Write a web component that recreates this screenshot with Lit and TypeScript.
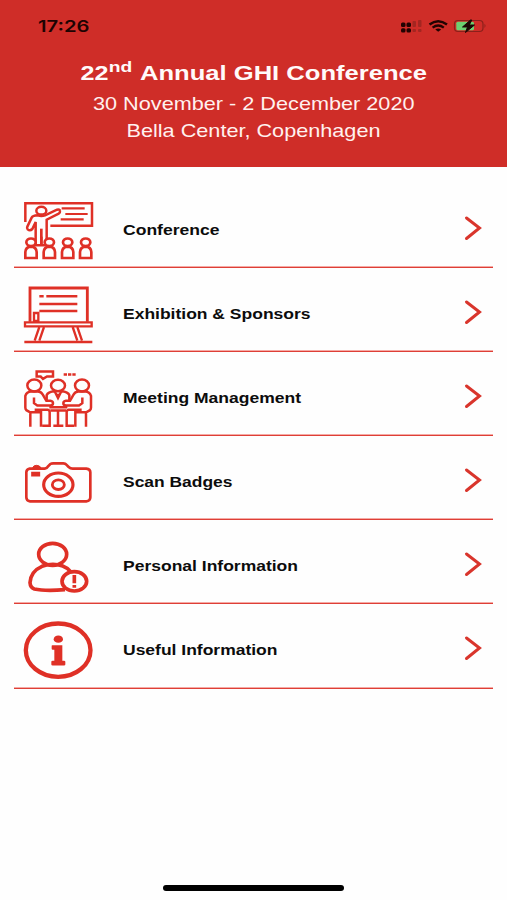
import { LitElement, html, css, svg } from "lit";
import { customElement, property } from "lit/decorators.js";

const conference = svg`
  <path d="M46 96V40H246V107H121"/>
  <path d="M155 55H224M166 72H233M152 88H221" stroke-width="6.500"/>
  <ellipse cx="94" cy="62" rx="15" ry="11.5"/>
  <path d="M83 76Q94 80 105 76L141 59Q149 57 150 63Q151 68 146 71L110 89V166H77V96L67 117Q60 124 53 118Q50 114 52 110L65 83Q68 77 83 76Z"/>
  <path d="M94 116V166" stroke-width="8"/>
  ${[63, 118, 173, 227].map(
    (x) => svg`<g transform="translate(${x} 0)" stroke-width="8">
      <path d="M-17 204V186Q-16 171 0 170Q16 171 17 186V204Z" fill="#fefefe"/>
      <ellipse cx="0" cy="157" rx="14" ry="11.500" fill="#fefefe"/></g>`
  )}
  <path d="M94 140V166" stroke-width="8"/>`;

const exhibition = svg`
  <path d="M60 140V39H232V140" stroke-width="8.500"/>
  <path d="M88 64H101M109 64H202M88 87H202M88 108H202"/>
  <path d="M72 138V114H85V138Z" stroke-width="7"/>
  <path d="M45 142H245V154H45Z" stroke-width="7"/>
  <path d="M88 156L74 197M102 156L88 197M188 156L202 197M202 156L216 197" stroke-width="7"/>
  <path d="M43 201H247" stroke-width="7"/>`;

const guest = svg`
  <ellipse cx="73" cy="77" rx="21" ry="18"/>
  <path d="M61 201V158L49 151Q46 148 46 143V108Q50 96 63 95H84Q94 96 98 104L109 123H121Q129 124 129 130Q129 136 121 137H82L72 130V113M61 157H93V201M74 150H113Q119 151 119 157V198H97"/>`;

const meeting = svg`
  <g stroke-width="7.500">
    <path d="M80 35H129V50H111L99 57L92 50H80Z"/>
    <path d="M161 44H171M174 44H184M187 44H197"/>
    <ellipse cx="144" cy="77" rx="21" ry="17"/>
    <path d="M110 121V106Q114 95 134 94L144 114L154 94Q174 95 178 106V121M144 102V116"/>
    ${guest}
    <g transform="translate(289 0) scale(-1 1)">${guest}</g>
    <path d="M118 142H172M121 152H168M144 152V198M130 198H160"/>
  </g>`;

const camera = svg`
  <path d="M59 72H104Q111 71 115 64L121 58Q124 56 130 56H160Q166 56 169 60L176 67Q181 72 188 72H229Q241 73 241 83V158Q241 169 229 170H60Q49 169 49 158V83Q49 74 59 72Z" stroke-width="8"/>
  <path d="M68 70Q70 62 79 62Q90 62 93 70Z" fill="currentColor" stroke-width="3"/>
  <path d="M66 84H88V93H66Z" fill="currentColor" stroke-width="5"/>
  <ellipse cx="145" cy="120" rx="44" ry="35" stroke-width="9.500"/>
  <ellipse cx="145" cy="120" rx="18" ry="14.5" stroke-width="8.500"/>`;

const person = svg`
  <g stroke-width="11">
    <ellipse cx="128" cy="74" rx="42" ry="33"/>
    <path d="M165 180Q105 185 73 178Q61 174 60 159Q62 125 96 110Q128 98 158 109Q174 115 183 127"/>
    <ellipse cx="193" cy="155" rx="37" ry="29"/>
    <path d="M193 136V161M193 166V174"/>
  </g>`;

const info = svg`
  <ellipse cx="144.500" cy="116" rx="97" ry="80" stroke-width="13"/>
  <ellipse cx="145" cy="83" rx="14" ry="11" fill="currentColor" stroke="none"/>
  <path d="M125 103Q125 101 127 101H157V148H162Q166 148 166 151V159Q166 162 162 162H128Q124 162 124 159V151Q124 148 128 148H133V115H128Q125 115 125 112Z" fill="currentColor" stroke="none"/>`;

const items = [
  { label: "Conference", width: 96.5, icon: conference, top: 18 },
  { label: "Exhibition & Sponsors", width: 187.5, icon: exhibition, top: 21 },
  { label: "Meeting Management", width: 178, icon: meeting, top: 23.5 },
  { label: "Scan Badges", width: 109.5, icon: camera, top: 26 },
  { label: "Personal Information", width: 175, icon: person, top: 29 },
  { label: "Useful Information", width: 154.5, icon: info, top: 22.5 },
];

@customElement("menu-row")
class MenuRow extends LitElement {
  @property({ attribute: false }) item!: (typeof items)[number];

  static styles = css`
    :host {
      display: grid;
      grid-template-columns: 100px 1fr 28px;
      height: 84.1px;
      box-sizing: border-box;
      border-bottom: 1px solid #de3f37;
      box-shadow: inset 0 -1px #f5aaa5;
    }
    svg { display: block; overflow: visible; }
    .icon {
      width: 100px;
      height: 84px;
      margin-left: -4px;
      color: #df3026;
      fill: none;
      stroke: currentColor;
      stroke-width: 7.5;
    }
    .label {
      height: 83px;
      margin-left: 8.5px;
      font: bold 15px "Liberation Sans", Arial, sans-serif;
      fill: #0c0c0c;
    }
    .chevron {
      width: 28px;
      height: 83px;
      fill: none;
      stroke: #d9352c;
      stroke-width: 3;
      stroke-linecap: round;
    }
  `;

  render() {
    const { label, width, icon, top } = this.item;
    return html`
      <svg class="icon" viewBox="0 ${-top} 300 252">${icon}</svg>
      <svg class="label"><text x="0" y="51" textLength=${width} lengthAdjust="spacingAndGlyphs">${label}</text></svg>
      <svg class="chevron" viewBox="0 0 28 83"><path d="M1.500 34L14.500 44L1.500 54.500"/></svg>
    `;
  }
}

@customElement("app-root")
class AppRoot extends LitElement {
  static styles = css`
    :host {
      display: flex;
      flex-direction: column;
      height: 900px;
      background: #fefefe;
      font-family: "Liberation Sans", Arial, sans-serif;
    }
    svg { display: block; }
    .header { height: 167px; background: #cf2d28; }
    .status { display: flex; justify-content: space-between; height: 52px; padding: 0 20px 0 38px; }
    .time { font: 600 16px Inter, sans-serif; fill: #1d0302; }
    .heading { fill: #fff1ef; }
    .title { font-size: 21px; font-weight: bold; fill: #fffafa; }
    .sup { font-size: 15px; font-weight: bold; fill: #fffafa; }
    .sub { font-size: 18.5px; }
    .list { flex: 1; padding: 17px 14px 0; }
    .home { align-self: center; width: 181px; height: 6px; margin-bottom: 9px; border-radius: 3px; background: #000; }
  `;

  render() {
    return html`
      <div class="header">
        <div class="status">
          <svg width="60" height="52"><text class="time" x="0" y="31.500" textLength="51.500" lengthAdjust="spacingAndGlyphs">17:26</text></svg>
          <svg width="90" height="52" viewBox="397 0 90 52">
            <g fill="#210302">
              <rect x="401" y="22.500" width="4.500" height="4.500" rx="1.500"/><rect x="406.500" y="22.500" width="4.500" height="4.500" rx="1.500"/>
              <rect x="401" y="28.300" width="4.500" height="4.200" rx="1.500"/><rect x="406.500" y="28.300" width="4.500" height="4.200" rx="1.500"/>
            </g>
            <g fill="#a32621">
              <rect x="412.500" y="21" width="3.500" height="6" rx="1"/><rect x="418" y="20" width="3.500" height="7" rx="1"/>
              <rect x="412.500" y="29" width="3.500" height="3" rx="1"/><rect x="418" y="29" width="3.500" height="3" rx="1"/>
            </g>
            <g fill="none" stroke="#210302" stroke-width="2.400">
              <path d="M429.500 24.500Q438.200 17.800 447 24.500"/><path d="M432.600 27.600Q438.200 23.500 443.800 27.600"/>
            </g>
            <path d="M435.300 29.400Q438.200 27.500 441.200 29.400L438.200 31.800Z" fill="#210302"/>
            <rect x="454.500" y="20.500" width="28.500" height="11" rx="3.500" fill="none" stroke="#8b201b" stroke-width="1.200"/>
            <path d="M484.500 23.800Q486.500 25.800 484.500 28Z" fill="#8b201b"/>
            <rect x="456.300" y="21.800" width="17.700" height="8.400" rx="1.500" fill="#6dd071"/>
            <path d="M470.500 20L462.500 27H467.500L465.500 32.500L474.500 25H469.300L471.800 20Z" fill="#1b0704" stroke="#1b0704" stroke-width="1"/>
          </svg>
        </div>
        <svg class="heading" width="507" height="115" viewBox="0 52 507 115">
          <text class="title" x="80.500" y="79.500" textLength="28" lengthAdjust="spacingAndGlyphs">22</text>
          <text class="sup" x="108.800" y="72" textLength="23.500" lengthAdjust="spacingAndGlyphs">nd</text>
          <text class="title" x="140" y="79.500" textLength="287" lengthAdjust="spacingAndGlyphs">Annual GHI Conference</text>
          <text class="sub" x="93" y="109.500" textLength="321.500" lengthAdjust="spacingAndGlyphs">30 November - 2 December 2020</text>
          <text class="sub" x="126.500" y="137.300" textLength="254" lengthAdjust="spacingAndGlyphs">Bella Center, Copenhagen</text>
        </svg>
      </div>
      <div class="list">${items.map((item) => html`<menu-row .item=${item}></menu-row>`)}</div>
      <div class="home"></div>
    `;
  }
}
